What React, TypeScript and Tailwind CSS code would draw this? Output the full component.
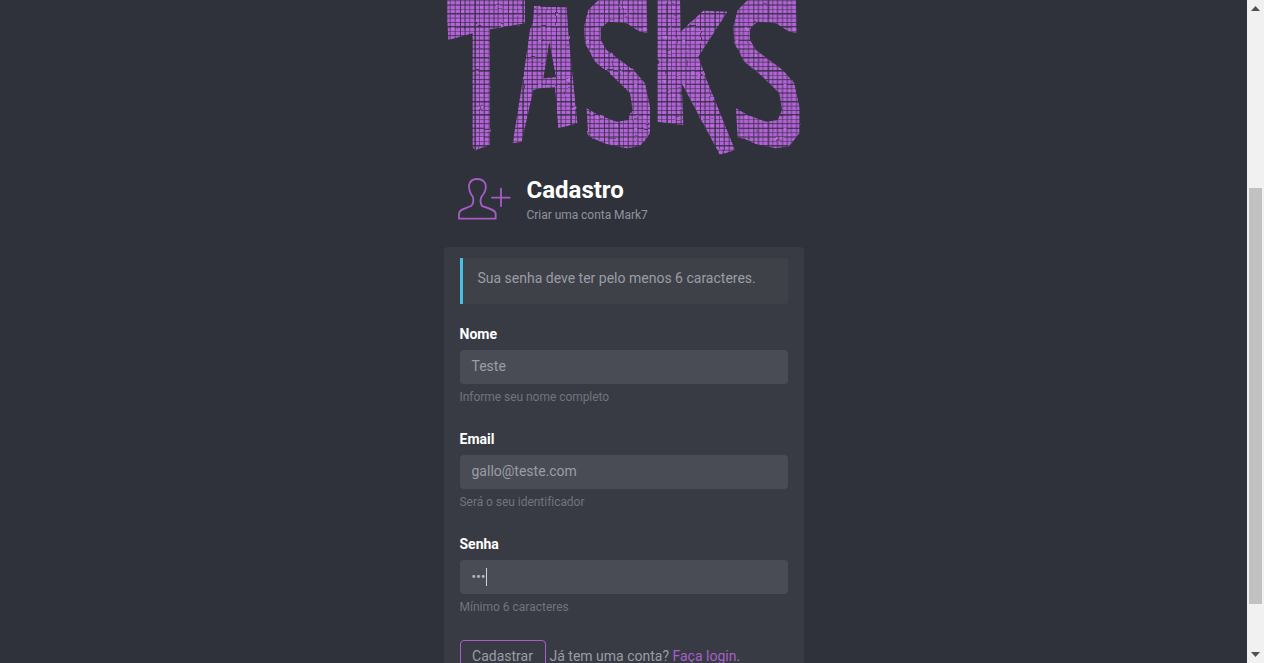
const S = "M620 0 L622 98 L600 95 L560 70 L505 65 L482 85 L482 120 L500 150 L580 210 L615 250 L630 320 L630 400 L600 438 L560 445 L500 432 L465 418 L445 412 L440 325 L475 345 L530 365 L565 360 L578 330 L570 280 L520 230 L465 185 L435 130 L432 80 L445 30 L475 0 Z";

const vLines: [number, number, number][] = [[2, 3, 0.75], [16, 4, 0.6], [29, 2.5, 0.8], [44, 3.5, 0.55], [60, 3, 0.85], [73, 4.5, 0.6], [88, 2.5, 0.7], [103, 5, 0.8], [117, 3, 0.55], [131, 3.5, 0.75]];
const hLines: [number, number, number][] = [[1, 2.5, 0.7], [13, 4, 0.75], [27, 2.5, 0.55], [39, 4.5, 0.85], [53, 3, 0.6], [66, 2.5, 0.75], [78, 5, 0.85], [93, 2.5, 0.55], [105, 3.5, 0.7], [119, 4, 0.8]];
const blotches: [number, number, number, number][] = [[20, 6, 9, 6], [64, 30, 8, 8], [107, 59, 9, 5], [34, 82, 9, 10], [92, 108, 10, 8], [7, 120, 8, 6], [120, 18, 9, 7], [50, 58, 8, 6]];

function Logo() {
  return (
    <svg viewBox="12 0 1080 480" className="block w-[360px] h-[160px]" role="img" aria-label="Tasks">
      <defs>
        <pattern id="weave" width="144" height="132" patternUnits="userSpaceOnUse">
          <rect width="144" height="132" fill="#b462d8" />
          {vLines.map(([x, w, o]) => <rect key={x} x={x} y="0" width={w} height="132" fill="#2f2f3c" opacity={o} />)}
          {hLines.map(([y, h, o]) => <rect key={y} x="0" y={y} width="144" height={h} fill="#2f2f3c" opacity={o} />)}
          {blotches.map(([x, y, w, h]) => <rect key={`${x}-${y}`} x={x} y={y} width={w} height={h} fill="#bf6ce6" opacity="0.9" />)}
        </pattern>
        <filter id="rough" x="-5%" y="-5%" width="110%" height="110%">
          <feTurbulence type="fractalNoise" baseFrequency="0.03" numOctaves="2" seed="7" />
          <feDisplacementMap in="SourceGraphic" scale="6" xChannelSelector="R" yChannelSelector="G" />
          <feGaussianBlur stdDeviation="1.2" />
        </filter>
      </defs>
      <g fill="url(#weave)" filter="url(#rough)" fillRule="evenodd">
        <path d="M22 -10 L255 -10 L255 70 L150 88 L150 435 L105 452 L98 440 L98 100 L25 120 L22 60 Z" />
        <path d="M282 20 L380 22 L385 100 L412 370 L355 385 L345 262 L300 265 L280 270 L245 425 L218 430 L250 230 L270 90 L280 60 Z M328 125 L348 232 L310 235 Z" />
        <path d={S} />
        <path d="M652 -10 L720 -10 L722 95 L790 32 L862 35 L775 170 L800 240 L885 450 L840 465 L725 250 L730 375 L652 365 Z" />
        <path d={S} transform="translate(448 0)" />
      </g>
    </svg>
  );
}

function UserPlus() {
  return (
    <svg viewBox="50 38 162 127" className="block w-[54px] h-[42.33px] mt-[3px] shrink-0" fill="none" stroke="#a55cc5" strokeWidth="5.5" strokeLinejoin="round" strokeLinecap="round">
      <path d="M58 160 H166 V145 C166 135 150 130 125 122 C118 110 120 100 125 92 C135 80 138 65 135 55 C130 45 118 41 110 41 C98 41 88 48 86 60 C85 75 90 85 98 95 C100 105 100 115 92 122 C75 130 56 132 56 145 V160 Z" />
      <path d="M155 97 H208 M182 70 V122" />
    </svg>
  );
}

function Field({ label, help, children }: { label: string; help: string; children: React.ReactNode }) {
  return (
    <div className="mb-[23px]">
      <div className="text-sm leading-5 font-bold text-white">{label}</div>
      <div className="mt-[6px] h-[34px] rounded bg-[#494c55] px-3 pb-[2px] flex items-center text-sm text-[#9b9da6]">{children}</div>
      <div className="mt-1 text-xs leading-[18px] tracking-[-0.04px] text-[#71747e]">{help}</div>
    </div>
  );
}

export default function App() {
  return (
    <div className="flex h-[663px] overflow-hidden bg-[#2f323b] font-['Roboto',sans-serif]">
      <main className="flex-1 min-w-0 flex justify-center">
        <div className="w-[360px] shrink-0">
          <Logo />
          <header className="h-[87px] pt-[15px] pl-[13px] flex items-start gap-4">
            <UserPlus />
            <div>
              <h1 className="text-2xl leading-[30px] font-bold text-white">Cadastro</h1>
              <p className="text-xs leading-5 tracking-[-0.04px] text-[#8f929c]">Criar uma conta Mark7</p>
            </div>
          </header>
          <section className="rounded-t bg-[#383b44] px-4 pt-[11px] pb-6">
            <div className="h-[46px] mb-5 rounded-r border-l-[3px] border-[#48bfe3] bg-[#3f4149] pl-[15px] pt-[9px] text-sm leading-[22px] text-[#9b9da6]">
              Sua senha deve ter pelo menos 6 caracteres.
            </div>
            <Field label="Nome" help="Informe seu nome completo">Teste</Field>
            <Field label="Email" help="Será o seu identificador">gallo@teste.com</Field>
            <div className="mb-6">
              <div className="text-sm leading-5 font-bold text-white">Senha</div>
              <div className="mt-[6px] h-[34px] rounded bg-[#494c55] px-3 flex items-center text-sm text-[#b5b7be]">
                <span className="text-[12px] leading-none font-bold tracking-[0.4px]">•••</span>
                <span className="h-[18px] w-px bg-[#d0d1d5]" />
              </div>
              <div className="mt-1 text-xs leading-[18px] text-[#71747e]">Mínimo 6 caracteres</div>
            </div>
            <div className="flex items-start gap-1 text-sm text-[#9b9da6]">
              <button className="h-[34px] w-[86px] rounded border border-[#a95fca] pb-[2px] text-sm text-[#9b9da6]">Cadastrar</button>
              <span className="mt-[6px] leading-5">Já tem uma conta? <a className="text-[#a95fca]">Faça login</a>.</span>
            </div>
          </section>
        </div>
      </main>
      <aside className="w-[17px] shrink-0 bg-[#f1f1f1] flex flex-col items-center">
        <svg viewBox="0 0 9 5" className="block w-[9px] h-[5px] mt-[6px] shrink-0" fill="#505050"><path d="M4.5 0 L9 5 H0 Z" /></svg>
        <div className="mt-[177px] h-[416px] w-[13px] shrink-0 bg-[#c1c1c1]" />
        <svg viewBox="0 0 9 5" className="block w-[9px] h-[5px] mt-[48px] shrink-0" fill="#505050"><path d="M0 0 H9 L4.5 5 Z" /></svg>
      </aside>
    </div>
  );
}
